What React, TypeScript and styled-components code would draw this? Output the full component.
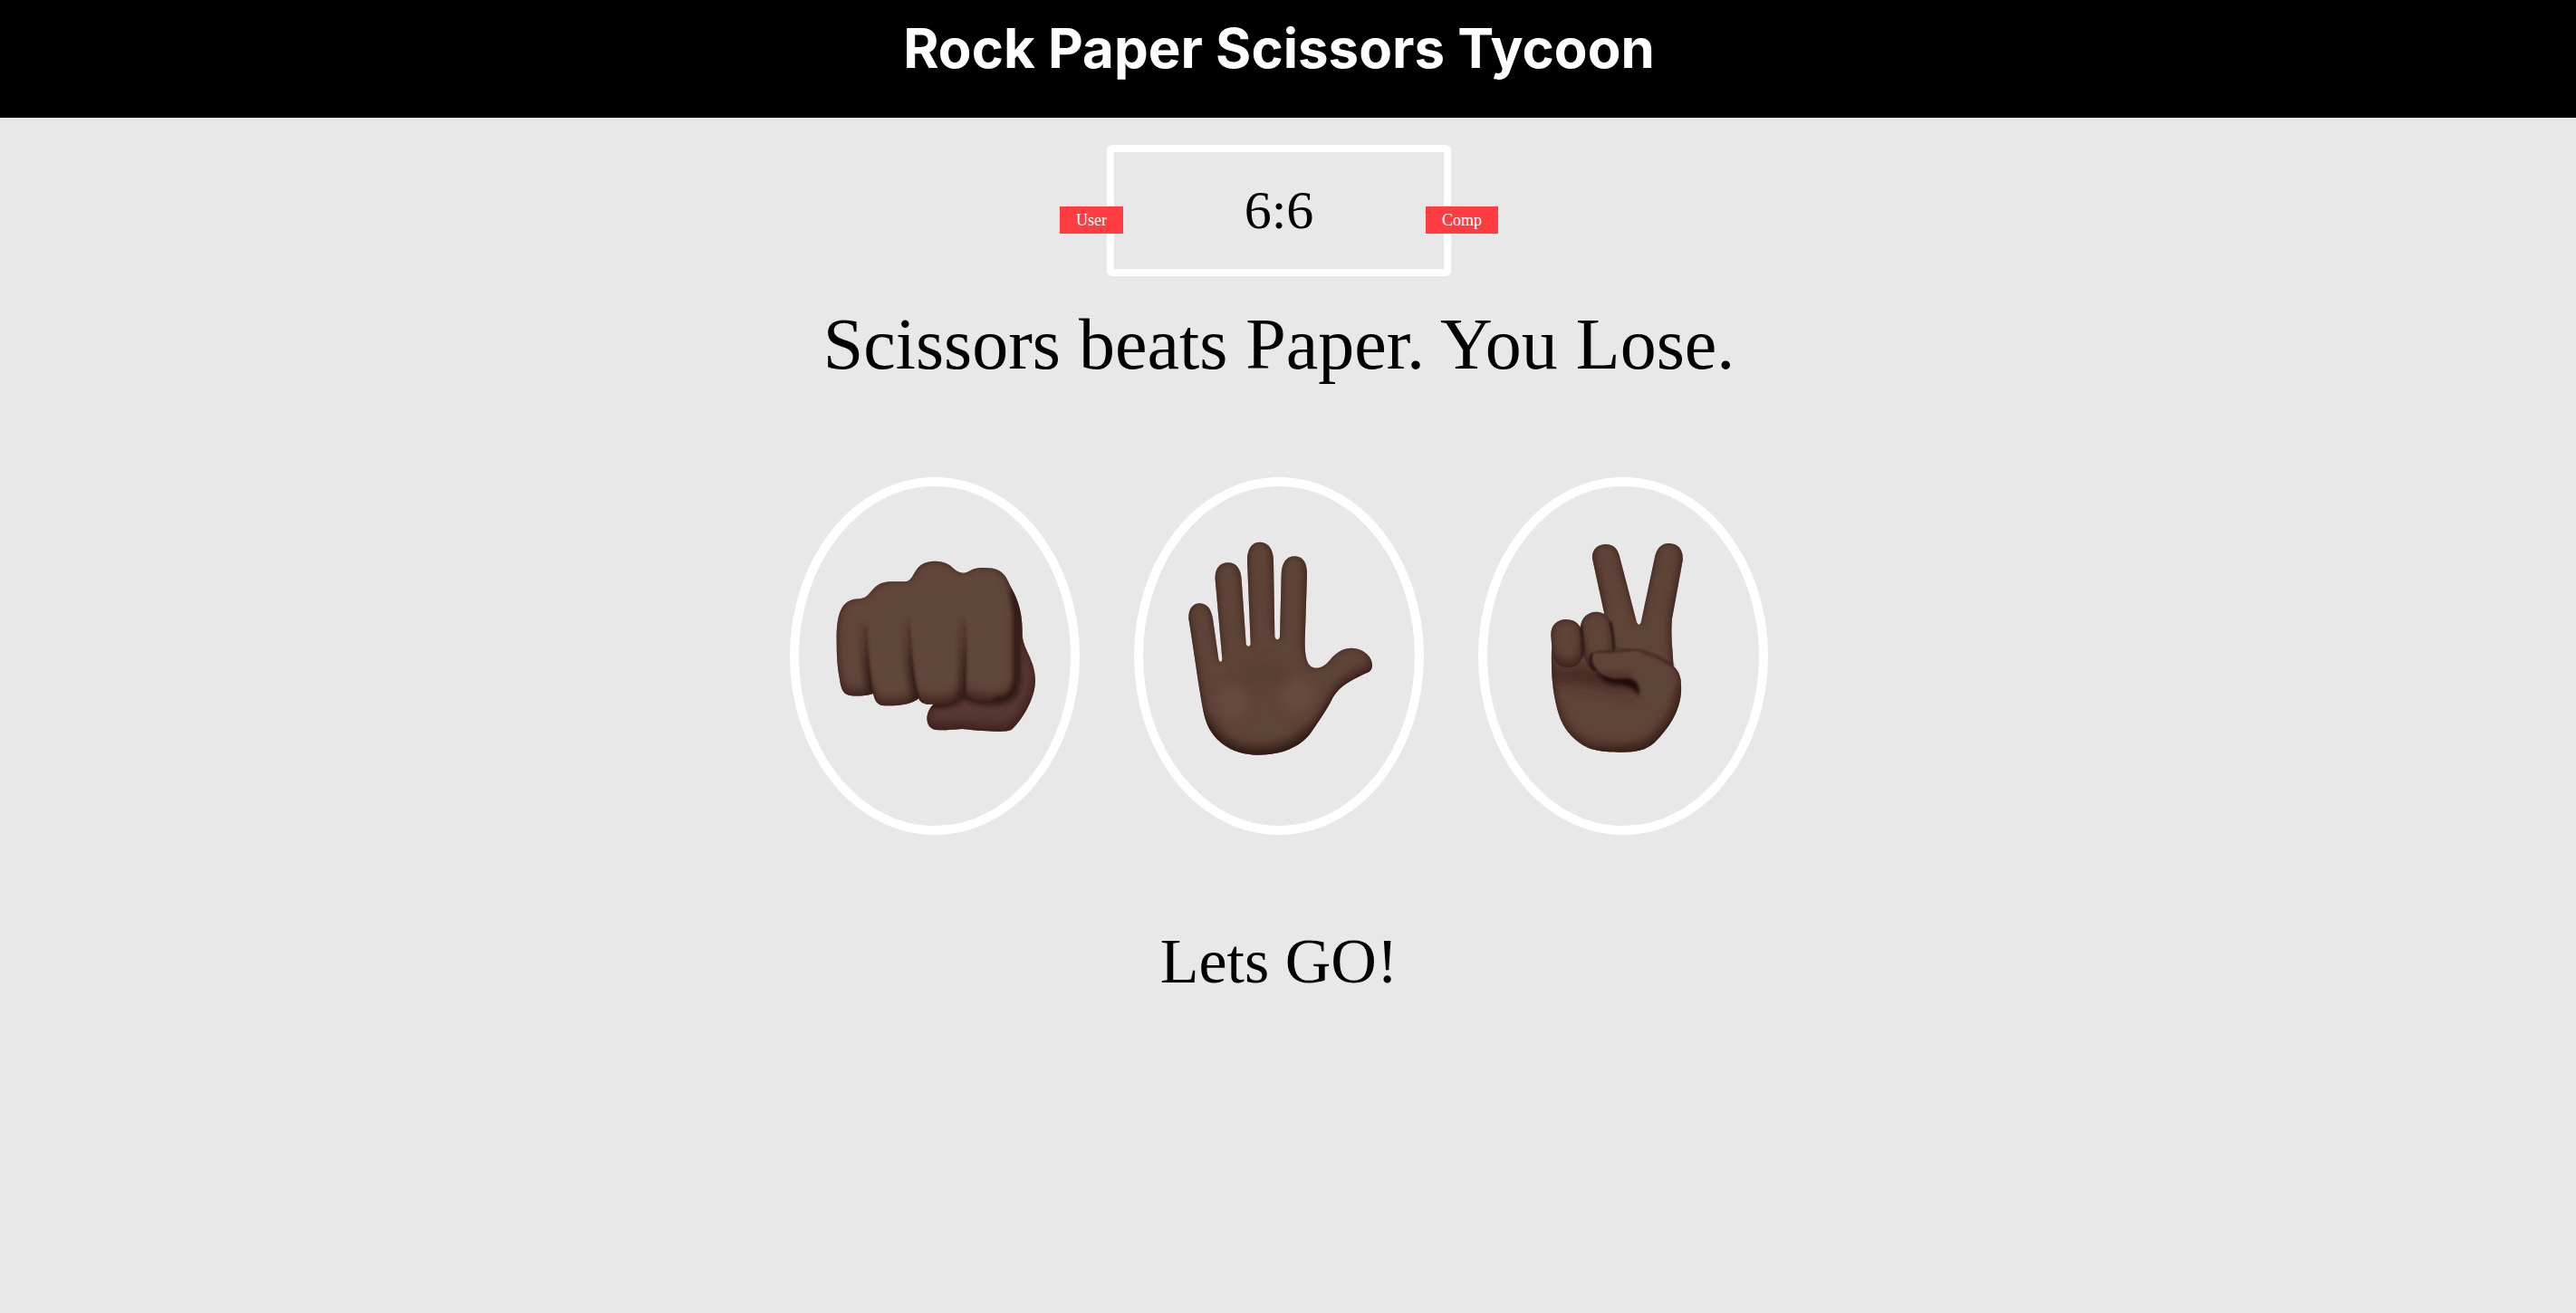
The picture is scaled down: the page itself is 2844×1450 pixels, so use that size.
import React from "react";
import styled, { createGlobalStyle } from "styled-components";

const GlobalStyle = createGlobalStyle`
  * {
    box-sizing: border-box;
  }
  body {
    margin: 0;
    background: #e8e8e8;
    color: #000;
    font-family: "Liberation Serif", "Times New Roman", serif;
  }
`;

const Header = styled.header`
  background: #000;
  padding: 14px 20px 38px 0;
`;

const Title = styled.h1`
  margin: 0;
  color: #fff;
  font-family: Inter, "Liberation Sans", sans-serif;
  font-size: 60px;
  font-weight: 700;
  line-height: 78px;
  text-align: center;
`;

const Main = styled.main`
  display: flex;
  flex-direction: column;
  align-items: center;
  padding: 30px 20px 30px 0;
`;

const ScoreBoard = styled.section`
  position: relative;
  width: 380px;
  padding: 30px 0;
  border: 8px solid #fff;
  border-radius: 6px;
  font-size: 60px;
  line-height: 69px;
  text-align: center;
`;

const Badge = styled.span<{ $side: "left" | "right" }>`
  position: absolute;
  top: 60px;
  ${(p) => (p.$side === "left" ? "right: 354px;" : "left: 344px;")}
  padding: 0 18px;
  background: #ff3d41;
  color: #fff;
  font-size: 18px;
  line-height: 30px;
`;

const Result = styled.p`
  margin: 30px 0 0;
  font-size: 80px;
  line-height: 90px;
  text-align: center;
`;

const Choices = styled.div`
  display: flex;
  gap: 60px;
  margin-top: 102px;
`;

const Choice = styled.button`
  width: 320px;
  height: 395px;
  padding: 0;
  border: 10px solid #fff;
  border-radius: 50%;
  background: transparent;
  cursor: pointer;
`;

const HandArt = styled.svg`
  display: block;
  width: 100%;
  height: 100%;
`;

const SharedDefs = styled.svg`
  position: absolute;
  width: 0;
  height: 0;
`;

const Action = styled.p`
  margin: 100px 0 0;
  font-size: 70px;
  line-height: 80px;
`;

function Shades() {
  return (
    <SharedDefs aria-hidden="true">
      <defs>
        <filter id="skin" x="-5%" y="-5%" width="110%" height="110%" colorInterpolationFilters="sRGB">
          <feGaussianBlur in="SourceAlpha" stdDeviation="10" result="rim" />
          <feComposite in="SourceAlpha" in2="rim" operator="out" result="rimShape" />
          <feFlood floodColor="#40211f" floodOpacity="0.75" />
          <feComposite in2="rimShape" operator="in" result="rimColor" />
          <feOffset in="SourceAlpha" dx="-4" dy="-20" result="lifted" />
          <feGaussianBlur in="lifted" stdDeviation="18" result="soft" />
          <feComposite in="SourceAlpha" in2="soft" operator="out" result="lowShape" />
          <feFlood floodColor="#371b18" floodOpacity="0.75" />
          <feComposite in2="lowShape" operator="in" result="lowColor" />
          <feMerge result="all">
            <feMergeNode in="SourceGraphic" />
            <feMergeNode in="rimColor" />
            <feMergeNode in="lowColor" />
          </feMerge>
          <feGaussianBlur in="all" stdDeviation="1" />
        </filter>
        <filter id="haze" x="-50%" y="-50%" width="200%" height="200%">
          <feGaussianBlur stdDeviation="8" />
        </filter>
        <filter id="mist" x="-50%" y="-50%" width="200%" height="200%">
          <feGaussianBlur stdDeviation="20" />
        </filter>
        <filter id="fine" x="-50%" y="-50%" width="200%" height="200%">
          <feGaussianBlur stdDeviation="3" />
        </filter>
        <linearGradient id="crease" x1="0" y1="480" x2="0" y2="680" gradientUnits="userSpaceOnUse">
          <stop offset="0" stopColor="#2a1412" stopOpacity="0" />
          <stop offset="1" stopColor="#2a1412" />
        </linearGradient>
      </defs>
    </SharedDefs>
  );
}

const FIST =
  "M191 560C191 480 203 424 266 424C312 420 300 372 366 367L418 367C456 362 440 299 518 299C580 301 572 336 612 338C636 336 630 322 676 321C752 319 756 360 775 404L788 470L788 690C786 740 765 762 710 763C665 764 630 758 612 736C590 770 555 775 490 773C473 770 465 762 463 753C445 772 400 779 350 778C325 777 318 762 312 738C290 745 260 747 240 745C215 742 206 728 201 690C193 650 191 610 191 560Z";

const FIST_THUMB =
  "M740 340C780 400 808 450 806 540C806 590 849 625 849 695C848 760 800 830 772 856C757 868 700 864 606 855C570 857 545 861 520 858C482 853 482 800 512 773L600 700Z";

function RockHand() {
  return (
    <HandArt viewBox="66 51 900 1125" aria-hidden="true">
      <path filter="url(#skin)" fill="#573832" d={FIST_THUMB} />
      <clipPath id="thumbClip">
        <path d={FIST_THUMB} />
      </clipPath>
      <g clipPath="url(#thumbClip)">
        <path d={FIST} fill="none" stroke="#29140f" strokeWidth="26" opacity="0.8" filter="url(#haze)" />
      </g>
      <path d={FIST} fill="#61463a" filter="url(#skin)" />
      <clipPath id="fistClip">
        <path d={FIST} />
      </clipPath>
      <g clipPath="url(#fistClip)" fill="none">
        <path d="M778 400L788 470L788 690C786 740 765 762 710 763" stroke="#24110d" strokeWidth="22" opacity="0.7" filter="url(#haze)" />
        <g stroke="url(#crease)" strokeWidth="22" opacity="0.6" filter="url(#haze)">
          <path d="M280 500C281 600 287 680 303 745" />
          <path d="M421 470C425 600 432 690 452 765" />
          <path d="M604 450C608 560 610 650 602 750" />
        </g>
        <g stroke="url(#crease)" strokeWidth="6" filter="url(#fine)">
          <path d="M287 520C290 600 296 680 310 742" />
          <path d="M430 490C434 600 440 690 462 760" />
          <path d="M614 470C616 560 618 650 614 742" />
        </g>
      </g>
    </HandArt>
  );
}

const PALM =
  "M217 490C216 458 230 439 254 439C280 440 292 460 297 490L316 622C318 636 328 636 328 622L305 360C303 325 320 304 347 304C375 304 390 325 392 360L407 572C409 584 421 584 422 572L411 300C410 260 425 236 454 236C483 237 498 262 498 300L502 548C505 562 517 562 519 548L524 345C525 305 540 283 569 283C597 284 609 305 609 345L602 560C601 620 610 652 638 653C664 653 678 635 692 618C712 598 730 587 757 587C795 588 826 615 825 645C823 664 815 666 800 672C755 694 720 710 695 750C670 800 650 825 620 870C585 915 525 941 446 941C355 940 290 890 270 815C255 755 240 630 217 490Z";

function PaperHand() {
  return (
    <HandArt viewBox="66 51 900 1125" aria-hidden="true">
      <path filter="url(#skin)" fill="#5f4438" d={PALM} />
      <clipPath id="palmClip">
        <path d={PALM} />
      </clipPath>
      <g clipPath="url(#palmClip)" fill="none">
        <ellipse cx="365" cy="765" rx="50" ry="55" fill="#684d41" opacity="0.8" filter="url(#mist)" />
        <ellipse cx="575" cy="745" rx="60" ry="55" fill="#684d41" opacity="0.8" filter="url(#mist)" />
        <ellipse cx="460" cy="670" rx="70" ry="40" fill="#573c31" opacity="0.7" filter="url(#mist)" />
        <path d="M262 830C290 910 355 950 446 950C525 950 590 925 630 870" stroke="#24120d" strokeWidth="46" opacity="0.7" filter="url(#mist)" />
        <path d="M630 870L700 760C725 715 765 700 830 670" stroke="#24120d" strokeWidth="14" opacity="0.6" filter="url(#haze)" />
      </g>
    </HandArt>
  );
}

const PEACE_PALM =
  "M279 590L430 570L560 595C620 610 660 630 688 652C708 675 709 695 708 735C703 800 665 855 620 900C590 926 560 932 508 932C450 931 415 928 385 910C320 868 303 820 290 755C279 700 278 650 279 590Z";

function ScissorsHand() {
  return (
    <HandArt viewBox="66 51 900 1125" aria-hidden="true">
      <path
        filter="url(#skin)"
        fill="#5f4438"
        d="M414 290C412 260 432 243 460 243C490 244 501 265 507 295L560 498C565 513 572 513 576 498L620 290C626 258 642 240 668 240C700 241 716 262 713 298L678 490C673 545 680 590 683 650L670 760L470 760L440 600L453 470Z"
      />
      <path filter="url(#skin)" fill="#5f4438" d={PEACE_PALM} />
      <clipPath id="peaceClip">
        <path d={PEACE_PALM} />
      </clipPath>
      <g clipPath="url(#peaceClip)">
        <path d="M270 640C330 670 380 640 410 640C440 690 500 700 570 730C530 750 450 715 390 710C350 705 310 700 270 700Z" fill="#43241f" opacity="0.75" filter="url(#mist)" />
        <path d="M440 945C540 950 600 935 650 885C690 835 715 790 720 720" fill="none" stroke="#24120d" strokeWidth="30" opacity="0.6" filter="url(#mist)" />
      </g>
      <path d="M374 530C373 490 395 467 428 467C462 469 475 490 480 520L487 600C480 640 440 660 418 660C395 650 388 620 386 600Z" fill="#5f4438" filter="url(#skin)" />
      <path d="M277 545C276 512 296 492 328 492C360 493 378 512 380 545L383 600C380 635 362 652 333 652C300 651 283 630 281 595Z" fill="#5f4438" filter="url(#skin)" />
      <path d="M376 515C382 550 384 590 382 618M474 500C482 530 485 560 487 592" fill="none" stroke="#29150f" strokeWidth="7" filter="url(#fine)" />
      <path d="M425 650C430 690 460 706 505 710C535 712 550 722 566 742C577 710 560 690 535 680L450 670Z" fill="#20100a" filter="url(#haze)" />
      <path d="M445 680C470 700 500 703 520 705C545 709 555 720 568 738C575 710 560 690 535 683L450 676Z" fill="#20100a" filter="url(#fine)" />
      <path d="M416 605C404 622 408 645 422 662" fill="none" stroke="#20100a" strokeWidth="8" filter="url(#fine)" />
      <linearGradient id="thumbTone" x1="0" y1="600" x2="0" y2="692" gradientUnits="userSpaceOnUse">
        <stop offset="0" stopColor="#614639" />
        <stop offset="0.55" stopColor="#5f4438" />
        <stop offset="1" stopColor="#4c2f29" />
      </linearGradient>
      <path
        d="M418 605C425 596 440 599 480 599C520 600 535 590 570 593C585 620 580 665 572 710C560 689 545 688 520 688C490 690 460 688 440 670C420 650 410 625 418 605Z"
        fill="url(#thumbTone)"
        filter="url(#fine)"
      />
      <path d="M545 605C600 610 650 640 675 665C690 700 680 740 640 790C610 790 590 770 574 735C574 710 560 690 545 685Z" fill="#5f4438" filter="url(#haze)" />
      <path d="M424 600C450 599 520 600 545 593C590 590 640 617 684 646" fill="none" stroke="#351d17" strokeWidth="4" filter="url(#fine)" />
    </HandArt>
  );
}

const hands = [
  { name: "Rock", Art: RockHand },
  { name: "Paper", Art: PaperHand },
  { name: "Scissors", Art: ScissorsHand },
];

export default function App() {
  return (
    <>
      <GlobalStyle />
      <Shades />
      <Header>
        <Title>Rock Paper Scissors Tycoon</Title>
      </Header>
      <Main>
        <ScoreBoard>
          <Badge $side="left">User</Badge>
          <span>6</span>:<span>6</span>
          <Badge $side="right">Comp</Badge>
        </ScoreBoard>
        <Result>Scissors beats Paper. You Lose.</Result>
        <Choices>
          {hands.map(({ name, Art }) => (
            <Choice key={name} type="button" aria-label={name}>
              <Art />
            </Choice>
          ))}
        </Choices>
        <Action>Lets GO!</Action>
      </Main>
    </>
  );
}
